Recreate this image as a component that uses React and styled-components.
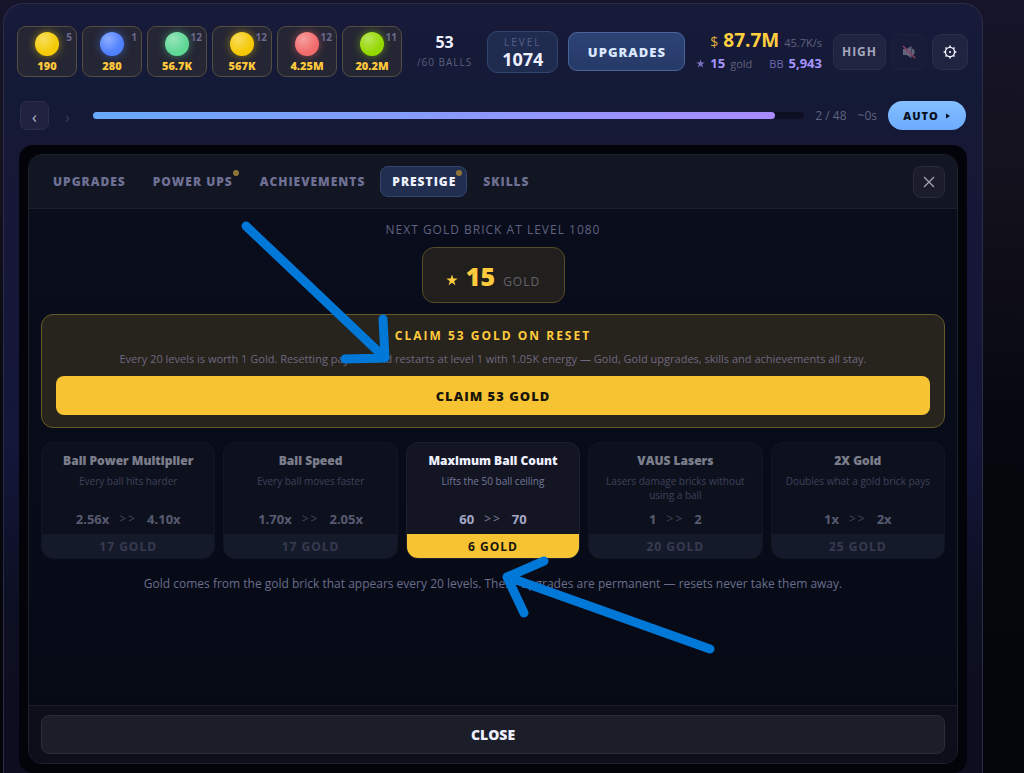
import React, { useState } from 'react'
import styled, { createGlobalStyle } from 'styled-components'

const balls = [
  { color: '#f5cb05', count: 5, price: '190' },
  { color: '#4f80ff', count: 1, price: '280' },
  { color: '#5fd795', count: 12, price: '56.7K' },
  { color: '#f5c905', count: 12, price: '567K' },
  { color: '#f26b6b', count: 12, price: '4.25M' },
  { color: '#93d800', count: 11, price: '20.2M' },
]

const tabs = [
  { name: 'UPGRADES' },
  { name: 'POWER UPS', dot: true },
  { name: 'ACHIEVEMENTS' },
  { name: 'PRESTIGE', dot: true },
  { name: 'SKILLS' },
]

const upgrades = [
  { title: 'Ball Power Multiplier', text: 'Every ball hits harder', from: '2.56x', to: '4.10x', cost: 17 },
  { title: 'Ball Speed', text: 'Every ball moves faster', from: '1.70x', to: '2.05x', cost: 17 },
  { title: 'Maximum Ball Count', text: 'Lifts the 50 ball ceiling', from: '60', to: '70', cost: 6 },
  { title: 'VAUS Lasers', text: 'Lasers damage bricks without using a ball', from: '1', to: '2', cost: 20 },
  { title: '2X Gold', text: 'Doubles what a gold brick pays', from: '1x', to: '2x', cost: 25 },
]

const gold = 15

function Star({ size }) {
  return (
    <svg width={size} height={size} viewBox="0 0 24 24" fill="currentColor" aria-hidden="true">
      <path d="M12 1l2.7 8.2h8.6l-7 5.1 2.7 8.2-7-5.1-7 5.1 2.7-8.2-7-5.1h8.6z" />
    </svg>
  )
}

function Gear() {
  return (
    <svg width="14" height="14" viewBox="0 0 14 14" fill="none" stroke="#f1f3ff" aria-hidden="true">
      <circle cx="7" cy="7" r="4.6" strokeWidth="1.4" />
      <circle cx="7" cy="7" r="1.1" fill="#f1f3ff" stroke="none" />
      <path
        strokeWidth="1.6"
        d="M7 .6v1.8M7 11.6v1.8M.6 7h1.8M11.6 7h1.8M2.5 2.5l1.2 1.2M10.3 10.3l1.2 1.2M2.5 11.5l1.2-1.2M10.3 3.7l1.2-1.2"
      />
    </svg>
  )
}

function Muted() {
  return (
    <svg width="14" height="14" viewBox="0 0 14 14" aria-hidden="true">
      <path d="M1 4h3.5L9.5 1v12l-5-3H1z" fill="#62627c" />
      <path d="M10 3.500l2.500 1.500v4l-2.500 1.500z" fill="#62627c" />
      <path d="M1 1l12 12" stroke="#87405a" strokeWidth="1.500" />
    </svg>
  )
}

function Arrows() {
  return (
    <Marks width="1024" height="773" viewBox="0 0 1024 773" aria-hidden="true">
      <path d="M246 226L384 357M383 319L385 358L345 359" />
      <path d="M710 649L508 577M544 561L507 577L524 613" />
    </Marks>
  )
}

function App() {
  const [tab, setTab] = useState('PRESTIGE')

  return (
    <Page>
      <GlobalStyle />
      <Frame>
        <TopBar>
          <Chips>
            {balls.map((ball) => (
              <Chip key={ball.price}>
                <Ball $color={ball.color} />
                <Count>{ball.count}</Count>
                {ball.price}
              </Chip>
            ))}
          </Chips>
          <Stat>
            <StatValue>53</StatValue>
            <StatLabel>/60 BALLS</StatLabel>
          </Stat>
          <Level>
            <LevelLabel>LEVEL</LevelLabel>
            <LevelValue>1074</LevelValue>
          </Level>
          <UpgradesButton>UPGRADES</UpgradesButton>
          <Wallet>
            <WalletRow>
              <Dollar>$</Dollar>
              <Money>87.7M</Money>
              <Rate>45.7K/s</Rate>
            </WalletRow>
            <WalletRow>
              <StarMark><Star size={9} /></StarMark>
              <Purple>15</Purple>
              <Unit>gold</Unit>
              <Bricks>BB</Bricks>
              <Purple>5,943</Purple>
            </WalletRow>
          </Wallet>
          <Tools>
            <Tool $wide>HIGH</Tool>
            <Tool $faded aria-label="Sound"><Muted /></Tool>
            <Tool aria-label="Settings"><Gear /></Tool>
          </Tools>
        </TopBar>

        <Progress>
          <Step aria-label="Previous level">‹</Step>
          <Step aria-label="Next level" disabled>›</Step>
          <Track>
            <Fill style={{ width: `${(46 / 48) * 100}%` }} />
          </Track>
          <Left>2 / 48</Left>
          <Left>~0s</Left>
          <Auto>
            AUTO
            <svg width="5" height="6" viewBox="0 0 5 6" aria-hidden="true">
              <path d="M0 0.500l4 2.500-4 2.500z" fill="#0a1020" />
            </svg>
          </Auto>
        </Progress>

        <Stage>
          <Modal>
            <ModalHead>
              {tabs.map((item) => (
                <Tab key={item.name} $active={item.name === tab} onClick={() => setTab(item.name)}>
                  {item.name}
                  {item.dot && <Dot />}
                </Tab>
              ))}
              <CloseIcon aria-label="Close">
                <svg width="12" height="12" viewBox="0 0 12 12" stroke="#a3a4b4" strokeWidth="1.3" aria-hidden="true">
                  <path d="M1 1l10 10M11 1L1 11" />
                </svg>
              </CloseIcon>
            </ModalHead>

            <ModalBody>
              <Next>NEXT GOLD BRICK AT LEVEL 1080</Next>
              <GoldBox>
                <Star size={12} />
                <GoldValue>{gold}</GoldValue>
                <GoldUnit>GOLD</GoldUnit>
              </GoldBox>

              <Claim>
                <ClaimTitle>CLAIM 53 GOLD ON RESET</ClaimTitle>
                <ClaimText>
                  Every 20 levels is worth 1 Gold. Resetting pays 53 and restarts at level 1 with 1.05K energy — Gold,
                  Gold upgrades, skills and achievements all stay.
                </ClaimText>
                <ClaimButton>CLAIM 53 GOLD</ClaimButton>
              </Claim>

              <Cards>
                {upgrades.map((item) => (
                  <Card key={item.title} $locked={item.cost > gold}>
                    <CardTitle>{item.title}</CardTitle>
                    <CardText>{item.text}</CardText>
                    <Change>
                      <span>{item.from}</span>
                      <Chevrons>&gt;&gt;</Chevrons>
                      <span>{item.to}</span>
                    </Change>
                    <Cost disabled={item.cost > gold}>{item.cost} GOLD</Cost>
                  </Card>
                ))}
              </Cards>
              <Note>
                Gold comes from the gold brick that appears every 20 levels. These upgrades are permanent — resets never
                take them away.
              </Note>
            </ModalBody>

            <ModalFoot>
              <CloseButton>CLOSE</CloseButton>
            </ModalFoot>
          </Modal>
        </Stage>
      </Frame>
      <Arrows />
    </Page>
  )
}

const GlobalStyle = createGlobalStyle`
  * {
    box-sizing: border-box;
  }
  body {
    margin: 0;
    background: #05060d;
    color: #eef0ff;
    font-family: "Open Sans", "Noto Sans", sans-serif;
    font-size: 12px;
  }
  button {
    font: inherit;
    color: inherit;
    padding: 0;
    cursor: pointer;
  }
  h2, h3, p {
    margin: 0;
  }
  svg {
    flex: none;
  }
`

/* Page and frame */
const Page = styled.div`
  position: relative;
  display: flex;
  min-height: 100vh;
  padding: 3px 41px 0 3px;
  overflow: hidden;
  background: linear-gradient(180deg, #15142a 0, #15131f 140px, #07080f 420px, #04050a 100%);
`

const Frame = styled.div`
  flex: 1;
  min-width: 0;
  display: flex;
  flex-direction: column;
  padding: 22px 15px 0;
  border: 1px solid #2b2d48;
  border-bottom: 0;
  border-radius: 20px 20px 0 0;
  background: linear-gradient(180deg, #181a3a 0, #131a36 90px, #171836 150px, #14163a 440px, #0d0f22 600px, #0c0e1f 100%);
`

/* Top bar */
const TopBar = styled.header`
  display: flex;
  align-items: center;
  margin: 0 -1px 0 -2px;
`

const Chips = styled.div`
  display: flex;
  gap: 5px;
`

const Chip = styled.button`
  position: relative;
  display: flex;
  flex-direction: column;
  align-items: center;
  gap: 3px;
  width: 60px;
  height: 51px;
  padding-top: 5px;
  border: 1px solid #544d42;
  border-radius: 9px;
  background: #252634;
  color: #ffc93c;
  font-size: 11px;
  font-weight: 800;
  line-height: 14px;
`

const Ball = styled.span`
  width: 24px;
  height: 24px;
  border-radius: 50%;
  background: radial-gradient(circle at 35% 30%, rgba(255, 255, 255, 0.35), transparent 60%) ${(p) => p.$color};
  box-shadow: 0 0 8px ${(p) => p.$color}88;
`

const Count = styled.span`
  position: absolute;
  top: 3px;
  right: 4px;
  color: #6c6a8e;
  font-size: 10px;
  font-weight: 700;
`

const Stat = styled.div`
  width: 86px;
  text-align: center;
`

const StatValue = styled.div`
  font-size: 16px;
  font-weight: 700;
  line-height: 20px;
`

const StatLabel = styled.div`
  color: #5c5f7c;
  font-size: 10px;
  letter-spacing: 1px;
  line-height: 20px;
`

const Level = styled.div`
  width: 72px;
  height: 42px;
  border: 1px solid #344470;
  border-radius: 10px;
  background: #202b50;
  text-align: center;
`

const LevelLabel = styled.div`
  color: #54608a;
  font-size: 10px;
  letter-spacing: 2px;
  line-height: 20px;
`

const LevelValue = styled.div`
  font-size: 18px;
  font-weight: 700;
  line-height: 14px;
`

const UpgradesButton = styled.button`
  width: 118px;
  height: 39px;
  margin-left: 10px;
  border: 1px solid #47659a;
  border-radius: 9px;
  background: linear-gradient(180deg, #2d4375, #263a68);
  color: #d9e8ff;
  font-size: 13px;
  font-weight: 800;
  letter-spacing: 1px;
`

const Wallet = styled.div`
  flex: 1;
  padding: 0 11px;
`

const WalletRow = styled.div`
  display: flex;
  align-items: baseline;
  justify-content: flex-end;
  gap: 5px;
  line-height: 20px;
  white-space: nowrap;
`

const Dollar = styled.span`
  color: #d9a93a;
  font-size: 14px;
`

const Money = styled.span`
  color: #ffcf40;
  font-size: 19px;
  font-weight: 700;
`

const Rate = styled.span`
  color: #60627e;
  font-size: 11px;
`

const Purple = styled.span`
  color: #a795ff;
  font-size: 13px;
  font-weight: 700;
`

const StarMark = styled(Purple)`
  color: #7d72c4;
`

const Unit = styled.span`
  color: #60627e;
  font-size: 11px;
`

const Bricks = styled(Unit)`
  margin-left: 12px;
  color: #7169b0;
`

const Tools = styled.div`
  display: flex;
  gap: 5px;
`

const Tool = styled.button`
  display: flex;
  align-items: center;
  justify-content: center;
  width: ${(p) => (p.$wide ? 53 : 36)}px;
  height: 36px;
  border: 1px solid ${(p) => (p.$faded ? '#1d1f3c' : '#2a2d4b')};
  border-radius: 9px;
  background: ${(p) => (p.$faded ? '#191c39' : '#212440')};
  color: #a5a7bd;
  font-size: 12px;
  font-weight: 700;
  letter-spacing: 1px;
`

/* Progress row */
const Progress = styled.div`
  display: flex;
  align-items: center;
  gap: 11px;
  margin-top: 24px;
  padding: 0 1px;
`

const Step = styled.button`
  width: 29px;
  height: 29px;
  padding-top: 3px;
  border: 1px solid #2c2e4a;
  border-radius: 7px;
  background: #202240;
  color: #b9bbd2;
  font-size: 16px;
  line-height: 20px;

  &:disabled {
    margin-left: -7px;
    border-color: transparent;
    background: transparent;
    color: #3a3c5a;
  }
`

const Track = styled.div`
  flex: 1;
  height: 7px;
  border-radius: 4px;
  background: #0e1022;
`

const Fill = styled.div`
  height: 7px;
  border-radius: 4px;
  background: linear-gradient(90deg, #68a9ff, #a98cff);
`

const Left = styled.span`
  color: #60627e;
`

const Auto = styled.button`
  display: flex;
  align-items: center;
  justify-content: center;
  gap: 7px;
  width: 78px;
  height: 29px;
  border: 0;
  border-radius: 15px;
  background: linear-gradient(180deg, #84bfff, #6cabff);
  color: #0a1020;
  font-size: 11px;
  font-weight: 800;
  letter-spacing: 1px;
`

/* Modal */
const Stage = styled.main`
  flex: 1;
  display: flex;
  margin-top: 15px;
  padding: 9px;
  border-radius: 14px;
  background: #03040a;
`

const Modal = styled.section`
  flex: 1;
  min-width: 0;
  display: flex;
  flex-direction: column;
  border: 1px solid #1e222d;
  border-radius: 14px;
  overflow: hidden;
  background: linear-gradient(180deg, #0a0d1c, #060a15);
`

const ModalHead = styled.nav`
  display: flex;
  align-items: center;
  gap: 4px;
  height: 54px;
  padding: 0 12px;
  border-bottom: 1px solid #1c202b;
  background: #121622;
`

const Tab = styled.button`
  position: relative;
  height: 31px;
  padding: 0 10px 0 11px;
  border: 1px solid ${(p) => (p.$active ? '#34456f' : 'transparent')};
  border-radius: 8px;
  background: ${(p) => (p.$active ? '#222e50' : 'transparent')};
  color: ${(p) => (p.$active ? '#eef2ff' : '#6f7095')};
  font-weight: 800;
  letter-spacing: 1px;
`

const Dot = styled.span`
  position: absolute;
  top: 3px;
  right: 4px;
  width: 6px;
  height: 6px;
  border-radius: 50%;
  background: #8f7638;
`

const CloseIcon = styled.button`
  display: flex;
  align-items: center;
  justify-content: center;
  width: 32px;
  height: 32px;
  margin-left: auto;
  border: 1px solid #292c38;
  border-radius: 8px;
  background: #1b1e2a;
`

const ModalBody = styled.div`
  flex: 1;
  display: flex;
  flex-direction: column;
  align-items: center;
  padding: 12px;
`

const Next = styled.p`
  color: #606280;
  letter-spacing: 1px;
  line-height: 17px;
`

const GoldBox = styled.div`
  display: flex;
  align-items: baseline;
  justify-content: center;
  gap: 8px;
  width: 143px;
  height: 56px;
  margin-top: 9px;
  border: 1px solid #574d25;
  border-radius: 12px;
  background: #211f1e;
  color: #ffcb3d;
  line-height: 56px;
`

const GoldValue = styled.span`
  font-size: 25px;
  font-weight: 800;
`

const GoldUnit = styled.span`
  color: #66636a;
  letter-spacing: 1px;
`

const Claim = styled.section`
  align-self: stretch;
  margin-top: 11px;
  padding: 12px 14px;
  border: 1px solid #665a28;
  border-radius: 12px;
  background: #27231d;
  text-align: center;
`

const ClaimTitle = styled.h2`
  color: #ffcb3d;
  font-size: 12px;
  font-weight: 700;
  letter-spacing: 2px;
  line-height: 17px;
`

const ClaimText = styled.p`
  margin-top: 6px;
  color: #6f6880;
  font-size: 11px;
  line-height: 17px;
`

const ClaimButton = styled.button`
  width: 100%;
  height: 39px;
  margin-top: 9px;
  border: 0;
  border-radius: 8px;
  background: #f6c433;
  color: #1a1509;
  font-size: 13px;
  font-weight: 800;
  letter-spacing: 1px;
`

/* Upgrade cards */
const Cards = styled.div`
  align-self: stretch;
  display: grid;
  grid-template-columns: repeat(5, 1fr);
  gap: 8px;
  margin-top: 14px;
`

const Card = styled.article`
  display: flex;
  flex-direction: column;
  border: 1px solid #1c202c;
  border-radius: 12px;
  overflow: hidden;
  background: #131622;
  text-align: center;
  opacity: ${(p) => (p.$locked ? 0.5 : 1)};
`

const CardTitle = styled.h3`
  padding-top: 9px;
  font-size: 12px;
  font-weight: 800;
  line-height: 18px;
`

const CardText = styled.p`
  min-height: 28px;
  margin-top: 4px;
  padding: 0 8px;
  color: #74769a;
  font-size: 10px;
  line-height: 14px;
`

const Change = styled.div`
  display: flex;
  justify-content: center;
  gap: 10px;
  margin: 8px 0 6px;
  color: #a6a8c8;
  font-size: 13px;
  font-weight: 700;
  line-height: 18px;
`

const Chevrons = styled.span`
  color: #7c7e9c;
  font-size: 12px;
  font-weight: 400;
  letter-spacing: 2px;
`

const Cost = styled.button`
  height: 24px;
  border: 0;
  background: #f6c433;
  color: #1a1509;
  font-weight: 700;
  letter-spacing: 1px;

  &:disabled {
    background: #232a3e;
    color: #666888;
  }
`

const Note = styled.p`
  margin-top: 16px;
  color: #6b6d8c;
  line-height: 17px;
`

const ModalFoot = styled.footer`
  padding: 9px 12px;
  border-top: 1px solid #1a1d28;
  background: #0c0f1a;
`

const CloseButton = styled.button`
  width: 100%;
  height: 39px;
  border: 1px solid #2a2c38;
  border-radius: 8px;
  background: #1b1d28;
  font-size: 14px;
  font-weight: 800;
`

/* Pointers drawn over the page */
const Marks = styled.svg`
  position: absolute;
  top: 0;
  left: 0;
  fill: none;
  stroke: #0078d7;
  stroke-width: 9;
  stroke-linecap: round;
  stroke-linejoin: round;
  pointer-events: none;
`

export default App
